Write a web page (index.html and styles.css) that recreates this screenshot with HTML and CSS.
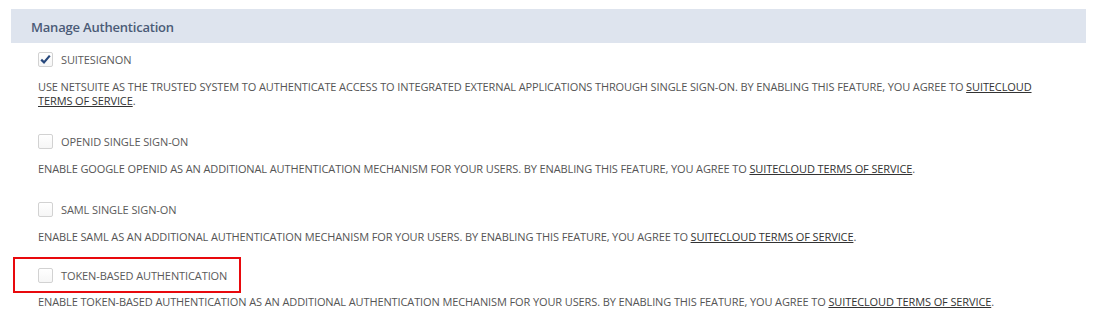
FILE: index.html
```html
<!DOCTYPE html>
<html lang="en">
<head>
    <meta charset="UTF-8">
    <title>Manage Authentication</title>
    <link rel="stylesheet" href="styles.css">
</head>
<body>
    <div class="page">
        <div class="section-head">Manage Authentication</div>

        <div class="features">
            <div class="feature">
                <div class="check-row">
                    <span class="checkbox checked">
                        <svg width="13" height="13" viewBox="0 0 13 13"><path d="M2.2 6.6 L5 9.4 L10.8 2.6" fill="none" stroke="#27487c" stroke-width="2.2"/></svg>
                    </span>
                    <span class="label">SUITESIGNON</span>
                </div>
                <p class="desc">
                    USE NETSUITE AS THE TRUSTED SYSTEM TO AUTHENTICATE ACCESS TO INTEGRATED EXTERNAL APPLICATIONS THROUGH SINGLE SIGN-ON. BY ENABLING THIS FEATURE, YOU AGREE TO <a href="#">SUITECLOUD TERMS OF SERVICE</a>.
                </p>
            </div>

            <div class="feature">
                <div class="check-row">
                    <span class="checkbox"></span>
                    <span class="label">OPENID SINGLE SIGN-ON</span>
                </div>
                <p class="desc">
                    ENABLE GOOGLE OPENID AS AN ADDITIONAL AUTHENTICATION MECHANISM FOR YOUR USERS. BY ENABLING THIS FEATURE, YOU AGREE TO <a href="#">SUITECLOUD TERMS OF SERVICE</a>.
                </p>
            </div>

            <div class="feature">
                <div class="check-row">
                    <span class="checkbox"></span>
                    <span class="label">SAML SINGLE SIGN-ON</span>
                </div>
                <p class="desc">
                    ENABLE SAML AS AN ADDITIONAL AUTHENTICATION MECHANISM FOR YOUR USERS. BY ENABLING THIS FEATURE, YOU AGREE TO <a href="#">SUITECLOUD TERMS OF SERVICE</a>.
                </p>
            </div>

            <div class="feature">
                <div class="check-row highlight">
                    <span class="checkbox"></span>
                    <span class="label">TOKEN-BASED AUTHENTICATION</span>
                </div>
                <p class="desc">
                    ENABLE TOKEN-BASED AUTHENTICATION AS AN ADDITIONAL AUTHENTICATION MECHANISM FOR YOUR USERS. BY ENABLING THIS FEATURE, YOU AGREE TO <a href="#">SUITECLOUD TERMS OF SERVICE</a>.
                </p>
            </div>
        </div>
    </div>
</body>
</html>
```

FILE: styles.css
```css
body {
    margin: 0;
    padding: 0;
    background-color: #fff;
    font-family: "Open Sans", Arial, sans-serif;
}
.page {
    padding: 9px 18px 0 11px;
}
.section-head {
    height: 32px;
    line-height: 32px;
    padding: 2px 0 0 20px;
    background-color: #dee4ee;
    color: #4b5b77;
    font-size: 13px;
    font-weight: 600;
    letter-spacing: -0.2px;
}
.features {
    padding-left: 27px;
    width: 1010px;
}
.feature {
    margin-top: 9px;
}
.feature + .feature {
    margin-top: 26px;
}
.check-row {
    display: flex;
    align-items: center;
    height: 15px;
}
.checkbox {
    width: 13px;
    height: 13px;
    border: 1px solid #d2d2d2;
    border-radius: 2px;
    background: linear-gradient(#fff, #f6f6f6);
    display: flex;
    align-items: center;
    justify-content: center;
}
.checkbox svg {
    display: block;
}
.label {
    margin-left: 8px;
    font-size: 11px;
    color: #5a5a5a;
    line-height: 15px;
    letter-spacing: -0.1px;
}
.desc {
    margin: 13px 0 0;
    font-size: 11px;
    line-height: 14px;
    letter-spacing: -0.11px;
    color: #555;
}
.desc a {
    color: #333;
    text-decoration: underline;
}
.feature + .feature .highlight {
    margin-top: -13px;
}
.highlight {
    box-sizing: border-box;
    width: 228px;
    height: 36px;
    margin-left: -25px;
    padding-left: 23px;
    border: 2px solid #e8090d;
}
.highlight + .desc {
    margin-top: 2px;
}
```
